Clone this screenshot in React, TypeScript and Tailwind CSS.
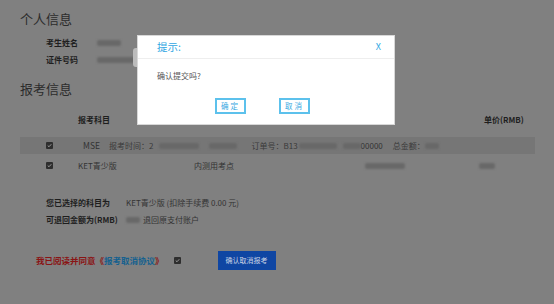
import React from "react";

const F = { fontFamily: '"Noto Sans CJK SC", "Noto Sans", sans-serif' };

function Check() {
  return (
    <div className="w-[7px] h-[7px] rounded-[1px] bg-[#2e2e2e] flex items-center justify-center">
      <svg width="5" height="5" viewBox="0 0 10 10">
        <path d="M1.5 5.2 L4 7.5 L8.5 2.5" stroke="#9a9a9a" strokeWidth="2" fill="none" />
      </svg>
    </div>
  );
}

function Blur({ w, c = "#686868", h = 6 }: { w: number; c?: string; h?: number }) {
  return <span className="inline-block blur-[0.8px] rounded-[2px]" style={{ width: w, height: h, background: c }} />;
}

export default function App() {
  return (
    <div className="relative w-[554px] h-[304px] overflow-hidden bg-[#808080] text-[#2a2a2a]" style={F}>
      <div className="flex flex-col pl-[20px] pt-[10px]">
        <div className="text-[13px] leading-[17px] text-[#2c2c2c]">个人信息</div>
        <div className="mt-[7px] flex items-center h-[17px] pl-[26px] text-[8px] font-bold text-[#1e1e1e]">
          <span className="w-[51px]">考生姓名</span>
          <Blur w={24} />
        </div>
        <div className="flex items-center h-[17px] pl-[26px] text-[8px] font-bold text-[#1e1e1e]">
          <span className="w-[51px]">证件号码</span>
          <Blur w={40} />
        </div>
        <div className="mt-[12px] text-[13px] leading-[17px] text-[#2c2c2c]">报考信息</div>
        <div className="mt-[17px] flex items-center h-[12px] text-[8px] font-bold text-[#1e1e1e]">
          <span className="w-[58px]" />
          <span className="w-[240px]">报考科目</span>
          <span className="w-[80px]">考试日期</span>
          <span className="ml-[86px]">单价(RMB)</span>
        </div>
        <div className="mt-[11px] w-[515px] h-[17px] bg-[#767676] flex items-center text-[8px] text-[#333]">
          <span className="w-[26px]" />
          <Check />
          <span className="ml-[30px] w-[26px] text-[8.5px]">MSE</span>
          <span className="text-[#3a3a3a]">报考时间：2</span>
          <span className="ml-[6px]"><Blur w={40} /></span>
          <span className="ml-[10px]"><Blur w={28} /></span>
          <span className="ml-[14px] text-[#3a3a3a]">订单号：B13</span>
          <span className="ml-[1px]"><Blur w={38} /></span>
          <span className="ml-[6px]"><Blur w={18} /></span>
          <span>00000</span>
          <span className="ml-[10px] text-[#3a3a3a]">总金额：</span>
          <Blur w={14} />
        </div>
        <div className="mt-[3px] h-[17px] flex items-center text-[8px] text-[#333]">
          <span className="w-[26px]" />
          <Check />
          <span className="ml-[25px] w-[116px]">KET青少版</span>
          <span className="w-[171px]">内测用考点</span>
          <Blur w={40} />
          <span className="ml-[74px]"><Blur w={16} /></span>
        </div>
        <div className="mt-[20px] h-[17px] pl-[26px] flex items-center text-[8px]">
          <span className="w-[80px] font-bold text-[#1e1e1e]">您已选择的科目为</span>
          <span className="text-[#333]">KET青少版 (扣除手续费 0.00 元)</span>
        </div>
        <div className="h-[17px] pl-[26px] flex items-center text-[8px]">
          <span className="w-[80px] font-bold text-[#1e1e1e]">可退回金额为(RMB)</span>
          <Blur w={14} />
          <span className="ml-[3px] text-[#333]">退回原支付账户</span>
        </div>
        <div className="mt-[22px] pl-[16px] flex items-center h-[20px]">
          <span className="text-[8.5px] font-bold text-[#8a1414]">
            我已阅读并同意《<span className="text-[#15618f]">报考取消协议</span>》
          </span>
          <span className="ml-[10px]"><Check /></span>
          <button className="ml-[37px] w-[58px] h-[19px] bg-[#0f46a3] text-[7px] text-[#c8d2e4]">确认取消报考</button>
        </div>
      </div>

      {/* side tab */}
      <div className="absolute left-[133px] top-[48px] w-[6px] h-[19px] rounded-l-[3px] bg-[#bcbcbc]" />

      {/* modal */}
      <div className="absolute left-[137px] top-[35px] w-[258px] h-[90px] bg-white border border-[#d8d8d8] flex flex-col">
        <div className="h-[23px] flex items-center justify-between pl-[19px] pr-[13px] border-b border-[#eeeeee]">
          <span className="text-[10.5px] text-[#2fa6e2]">提示:</span>
          <span className="text-[9px] text-[#2fa6e2]">X</span>
        </div>
        <div className="pl-[19px] mt-[11px] text-[8px] text-[#555] leading-[12px]">确认提交吗?</div>
        <div className="mt-[16px] flex pl-[77px] gap-[33px]">
          <button className="w-[31px] h-[16px] border-2 border-[#5cc1ec] text-[7.5px] text-[#3aa9e2] tracking-[2px] leading-none">确定</button>
          <button className="w-[31px] h-[16px] border-2 border-[#5cc1ec] text-[7.5px] text-[#3aa9e2] tracking-[2px] leading-none">取消</button>
        </div>
      </div>
    </div>
  );
}
